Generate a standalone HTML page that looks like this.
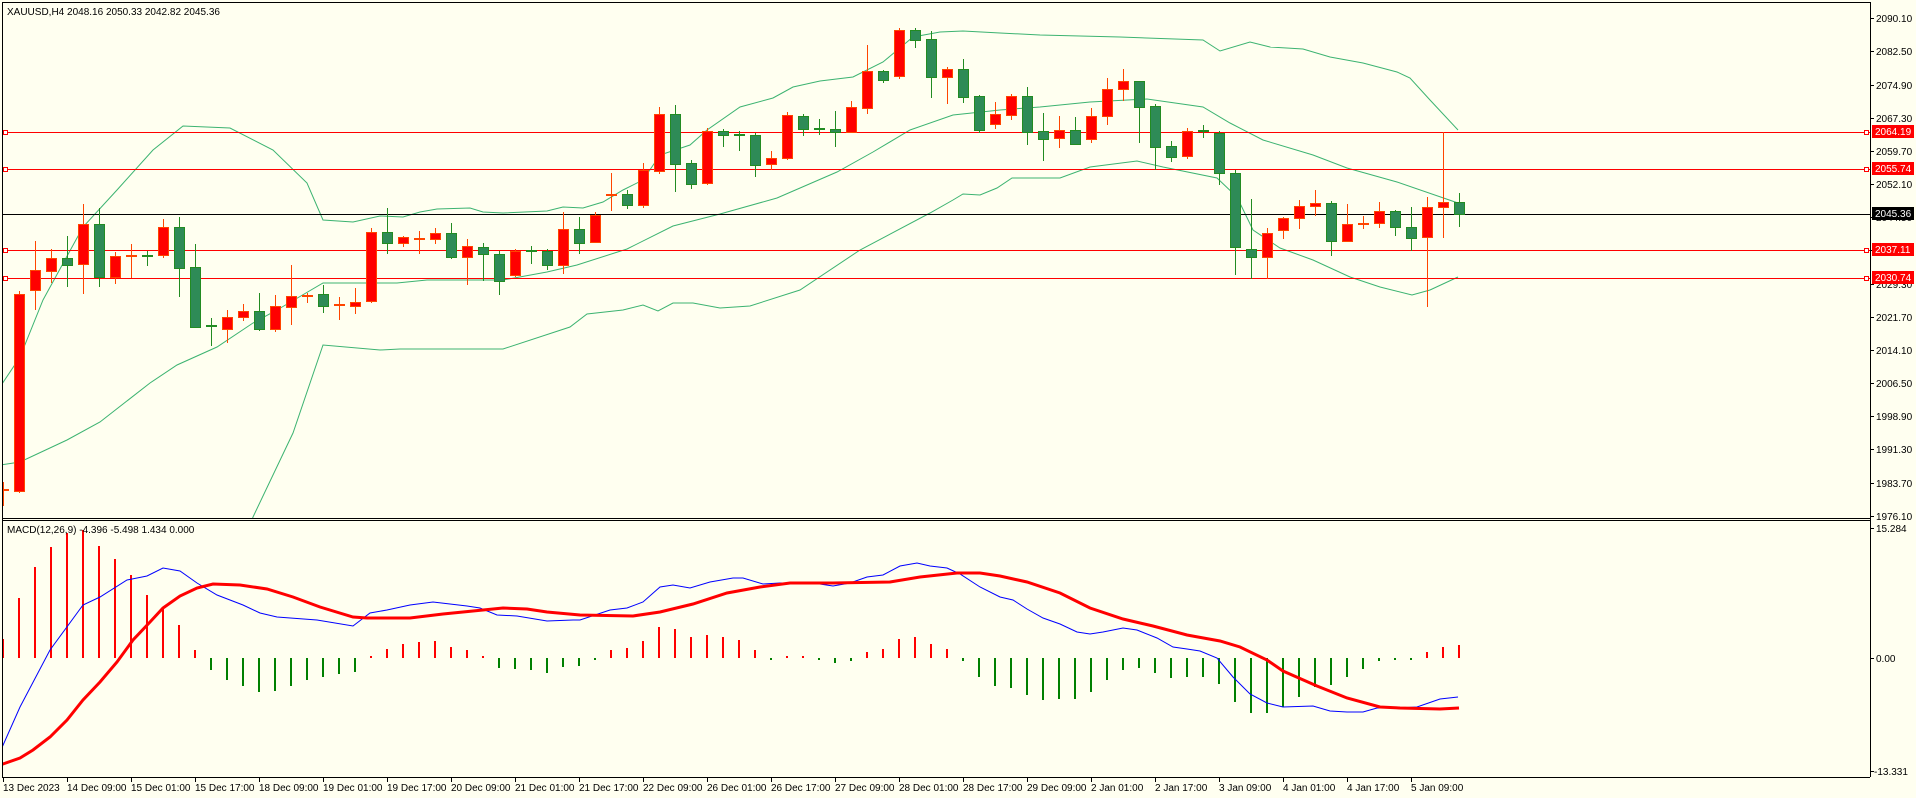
<!DOCTYPE html>
<html><head><meta charset="utf-8"><style>
html,body{margin:0;padding:0;background:#FFFFF0;width:1916px;height:798px;overflow:hidden}
svg{display:block}
text{font-family:"Liberation Sans","DejaVu Sans",sans-serif;font-size:10px;fill:#000}
</style></head><body>
<svg id="s" width="1916" height="798" viewBox="0 0 1916 798" xmlns="http://www.w3.org/2000/svg" shape-rendering="crispEdges">
<rect width="1916" height="798" fill="#FFFFF0"/>
<defs>
<clipPath id="cm"><rect x="2" y="2" width="1868" height="516"/></clipPath>
<clipPath id="cd"><rect x="2" y="520" width="1868" height="257"/></clipPath>
</defs>
<g id="main" clip-path="url(#cm)"></g>
<g id="macd" clip-path="url(#cd)"></g>
<g id="ax"></g>
<!-- borders -->
<line x1="2" y1="2.5" x2="1870" y2="2.5" stroke="#000"/>
<line x1="2.5" y1="2" x2="2.5" y2="777" stroke="#000"/>
<line x1="1870.5" y1="2" x2="1870.5" y2="777" stroke="#000"/>
<line x1="2" y1="518.5" x2="1870" y2="518.5" stroke="#000"/>
<line x1="2" y1="520.5" x2="1870" y2="520.5" stroke="#000"/>
<line x1="2" y1="777.5" x2="1870" y2="777.5" stroke="#000"/>
<text x="7" y="15">XAUUSD,H4  2048.16 2050.33 2042.82 2045.36</text>
<text x="7" y="533">MACD(12,26,9) -4.396 -5.498 1.434 0.000</text>
<g id="plabels">
<text x="1876" y="22">2090.10</text>
<text x="1876" y="55">2082.50</text>
<text x="1876" y="89">2074.90</text>
<text x="1876" y="122">2067.30</text>
<text x="1876" y="155">2059.70</text>
<text x="1876" y="188">2052.10</text>
<text x="1876" y="221">2044.50</text>
<text x="1876" y="254">2036.90</text>
<text x="1876" y="288">2029.30</text>
<text x="1876" y="321">2021.70</text>
<text x="1876" y="354">2014.10</text>
<text x="1876" y="387">2006.50</text>
<text x="1876" y="420">1998.90</text>
<text x="1876" y="453">1991.30</text>
<text x="1876" y="487">1983.70</text>
<text x="1876" y="520">1976.10</text>
<text x="1876" y="532">15.284</text>
<text x="1876" y="662">0.00</text>
<text x="1874" y="775">-13.331</text>
</g>
<g id="tags">
<rect x="1872" y="125" width="42" height="13" fill="#FF0000"/><text x="1875" y="135" style="fill:#fff">2064.19</text>
<rect x="1872" y="162" width="42" height="13" fill="#FF0000"/><text x="1875" y="172" style="fill:#fff">2055.74</text>
<rect x="1872" y="207" width="42" height="13" fill="#000"/><text x="1875" y="217" style="fill:#fff">2045.36</text>
<rect x="1872" y="243" width="42" height="13" fill="#FF0000"/><text x="1875" y="253" style="fill:#fff">2037.11</text>
<rect x="1872" y="271" width="42" height="13" fill="#FF0000"/><text x="1875" y="281" style="fill:#fff">2030.74</text>
</g>
<g id="tlabels">
<text x="3" y="791">13 Dec 2023</text>
<text x="67" y="791">14 Dec 09:00</text>
<text x="131" y="791">15 Dec 01:00</text>
<text x="195" y="791">15 Dec 17:00</text>
<text x="259" y="791">18 Dec 09:00</text>
<text x="323" y="791">19 Dec 01:00</text>
<text x="387" y="791">19 Dec 17:00</text>
<text x="451" y="791">20 Dec 09:00</text>
<text x="515" y="791">21 Dec 01:00</text>
<text x="579" y="791">21 Dec 17:00</text>
<text x="643" y="791">22 Dec 09:00</text>
<text x="707" y="791">26 Dec 01:00</text>
<text x="771" y="791">26 Dec 17:00</text>
<text x="835" y="791">27 Dec 09:00</text>
<text x="899" y="791">28 Dec 01:00</text>
<text x="963" y="791">28 Dec 17:00</text>
<text x="1027" y="791">29 Dec 09:00</text>
<text x="1091" y="791">2 Jan 01:00</text>
<text x="1155" y="791">2 Jan 17:00</text>
<text x="1219" y="791">3 Jan 09:00</text>
<text x="1283" y="791">4 Jan 01:00</text>
<text x="1347" y="791">4 Jan 17:00</text>
<text x="1411" y="791">5 Jan 09:00</text>
</g>
</svg>
<script>
(function(){
var NS="http://www.w3.org/2000/svg";
function el(p,t,a){var e=document.createElementNS(NS,t);for(var k in a)e.setAttribute(k,a[k]);p.appendChild(e);return e;}
var M=document.getElementById('main'),D=document.getElementById('macd'),A=document.getElementById('ax');
function pl(p,pts,c,w){el(p,'polyline',{points:pts.map(function(q){return q.join(',')}).join(' '),fill:'none',stroke:c,'stroke-width':w,'shape-rendering':'auto'});}
// bollinger
var up=[[0,387],[20,357],[43,300],[83,227],[117,190],[153,150],[183,126],[230,128],[273,150],[307,183],[323,220],[353,222],[380,216],[403,217],[420,212],[437,209],[470,208],[483,212],[503,213],[547,211],[563,207],[583,208],[603,202],[623,190],[643,180],[660,155],[690,145],[707,130],[740,107],[773,98],[793,87],[820,81],[853,77],[883,62],[913,37],[940,32],[963,31],[1000,33],[1040,35],[1120,37],[1203,40],[1220,51],[1250,42],[1270,47],[1303,49],[1330,57],[1363,63],[1397,72],[1410,78],[1430,100],[1458,130]];
var mid=[[0,465],[20,462],[67,440],[100,422],[150,383],[177,365],[217,347],[253,323],[277,310],[323,283],[380,283],[397,283],[427,280],[503,280],[547,272],[577,265],[627,249],[673,226],[720,214],[777,198],[837,172],[873,152],[910,130],[953,115],[1000,110],[1040,107],[1090,102],[1147,99],[1203,107],[1230,123],[1263,140],[1313,155],[1347,168],[1397,182],[1458,203]];
var lo=[[240,560],[253,517],[293,433],[323,345],[380,350],[400,349],[503,349],[570,327],[587,314],[623,310],[643,305],[658,311],[673,303],[693,303],[720,308],[750,306],[800,290],[860,250],[930,213],[953,200],[963,194],[980,195],[997,188],[1012,178],[1060,178],[1090,167],[1137,161],[1163,167],[1217,178],[1237,197],[1253,230],[1280,248],[1313,260],[1350,277],[1380,287],[1412,295],[1430,290],[1458,277]];
[up,mid,lo].forEach(function(b){pl(M,b,'#3CB371',1);});
// levels
[[132,'#FF0000'],[169,'#FF0000'],[250,'#FF0000'],[278,'#FF0000'],[214,'#000']].forEach(function(l){
 el(M,'line',{x1:2,x2:1870,y1:l[0]+.5,y2:l[0]+.5,stroke:l[1]});
 if(l[1]!='#000'){el(M,'rect',{x:3.5,y:l[0]-1.5,width:4,height:4,fill:'#fff',stroke:'#FF0000'});el(M,'rect',{x:1864.5,y:l[0]-1.5,width:4,height:4,fill:'#fff',stroke:'#FF0000'});}
});
// candles
var C=`0 r 482 505 489 491
1 r 291 492 294 491
2 r 241 309 270 290
3 r 249 282 258 271
4 g 236 286 258 265
5 r 204 293 224 264
6 g 208 286 224 277
7 r 252 283 256 277
8 r 244 277 255 257
9 g 251 265 255 257
10 r 219 257 227 255
11 g 217 296 227 268
12 g 244 327 267 327
13 g 318 345 325 327
14 r 310 342 317 329
15 r 304 320 311 317
16 g 293 330 311 329
17 r 295 331 306 329
18 r 265 324 296 307
19 r 293 302 295 297
20 g 285 312 294 306
21 r 297 319 304 306
22 r 288 313 302 306
23 r 228 302 232 301
24 g 208 253 232 243
25 r 236 246 237 243
26 r 231 253 238 240
27 r 228 243 233 239
28 g 223 258 233 257
29 r 239 284 246 257
30 g 243 280 247 254
31 g 251 294 254 281
32 r 249 276 251 275
33 g 246 263 250 252
34 g 249 269 251 265
35 r 212 273 229 265
36 g 217 253 229 243
37 r 212 242 215 242
38 r 173 210 194 196
39 g 190 208 194 205
40 r 163 207 170 205
41 r 107 173 114 171
42 g 105 191 114 164
43 g 160 188 163 184
44 r 128 184 131 183
45 g 129 146 131 135
46 g 131 150 134 136
47 g 133 176 135 165
48 r 151 169 158 164
49 r 112 159 115 158
50 g 114 135 116 129
51 g 119 134 128 130
52 g 111 146 129 132
53 r 101 132 107 132
54 r 45 113 71 108
55 g 70 82 71 80
56 r 28 78 30 76
57 g 28 47 30 40
58 g 31 97 39 77
59 r 67 103 69 77
60 g 59 102 69 97
61 g 95 132 96 130
62 r 102 128 114 124
63 r 94 119 96 115
64 g 87 144 96 132
65 g 113 160 131 139
66 r 116 147 130 138
67 g 117 144 130 144
68 r 108 142 116 139
69 r 78 124 89 116
70 r 69 100 81 89
71 g 81 142 81 107
72 g 104 169 106 147
73 g 141 161 146 157
74 r 128 158 131 156
75 g 125 137 130 132
76 g 131 184 133 173
77 g 170 274 173 247
78 g 199 278 249 257
79 r 228 278 233 257
80 r 217 238 218 230
81 r 200 228 206 218
82 r 190 215 203 206
83 g 201 255 203 241
84 r 204 241 224 241
85 r 216 228 223 225
86 r 202 227 211 223
87 g 210 235 211 227
88 g 207 250 227 238
89 r 197 306 207 237
90 r 132 237 202 207
91 g 193 226 202 214`.split('\n');
C.forEach(function(line){var a=line.trim().split(/\s+/);var k=+a[0],x=3+16*k,r=a[1]=='r';
 var fill=r?'#FF0000':'#2E8B57',st=r?'#FF4500':'#228B22';
 var wt=+a[2],wb=+a[3],bt=+a[4],bb=+a[5];
 el(M,'rect',{x:x,y:wt,width:1,height:wb-wt+1,fill:st});
 if(bb-bt<=2){el(M,'rect',{x:x-5,y:bt,width:11,height:2,fill:st});}
 else el(M,'rect',{x:x-4.5,y:bt+.5,width:10,height:bb-bt,fill:fill,stroke:st});
});
// histogram
var H=[639,598,567,547,533,530,546,559,575,595,607,625,650,670,680,686,692,691,686,680,677,674,672,656,649,644,642,641,647,650,656,668,669,670,673,667,666,660,650,648,641,627,629,637,635,637,640,650,660,656,656,660,663,661,652,649,639,637,644,649,661,677,686,688,695,700,699,699,692,680,670,668,673,678,677,677,684,702,713,713,707,697,687,685,677,669,661,660,660,652,647,645];
H.forEach(function(v,k){var x=3+16*k;
 if(v<658)el(D,'rect',{x:x-1,y:v,width:2,height:658-v,fill:'#FF0000'});
 else el(D,'rect',{x:x-1,y:658,width:2,height:v-658,fill:'#008000'});
});
var blue=[[0,752],[20,707],[50,650],[83,605],[100,597],[127,580],[147,576],[163,568],[180,571],[197,583],[217,595],[243,605],[260,613],[277,617],[317,620],[353,626],[370,613],[387,610],[410,605],[433,602],[467,606],[480,608],[497,615],[517,616],[547,621],[573,620],[580,620],[610,610],[627,608],[643,602],[660,587],[673,585],[690,588],[710,582],[733,578],[743,578],[763,584],[780,583],[813,583],[833,586],[850,583],[867,577],[883,575],[900,566],[917,563],[930,566],[947,568],[960,574],[980,587],[1000,597],[1013,600],[1027,609],[1043,618],[1060,624],[1077,632],[1090,634],[1103,632],[1123,628],[1137,630],[1157,638],[1173,647],[1187,649],[1200,651],[1217,658],[1233,677],[1250,694],[1267,703],[1283,707],[1313,706],[1330,711],[1347,712],[1363,712],[1377,708],[1397,708],[1417,707],[1440,699],[1458,697]];
var red=[[0,765],[20,758],[33,750],[50,737],[67,720],[83,700],[100,682],[117,662],[133,640],[150,622],[163,608],[180,596],[197,588],[213,584],[240,585],[267,589],[293,597],[320,607],[353,617],[367,618],[410,618],[443,614],[473,611],[503,608],[527,609],[547,612],[580,615],[633,616],[660,612],[693,604],[727,593],[760,587],[790,583],[833,583],[890,582],[920,577],[957,573],[980,573],[1000,576],[1027,582],[1060,593],[1090,608],[1123,619],[1153,626],[1187,635],[1220,641],[1240,647],[1267,660],[1283,671],[1317,686],[1347,698],[1380,707],[1400,708],[1440,709],[1459,708]];
pl(D,blue,'#0000FF',1);
pl(D,red,'#FF0000',3);
// ticks
[22,55,89,122,155,188,221,254,288,321,354,387,420,453,487,520].forEach(function(y){el(A,'rect',{x:1871,y:y-4,width:3,height:1,fill:'#000'});});
[528,658,771].forEach(function(y){el(A,'rect',{x:1871,y:y,width:3,height:1,fill:'#000'});});
for(var i=0;i<23;i++){el(A,'rect',{x:3+64*i,y:778,width:1,height:4,fill:'#000'});}
})();
</script>
</body></html>
